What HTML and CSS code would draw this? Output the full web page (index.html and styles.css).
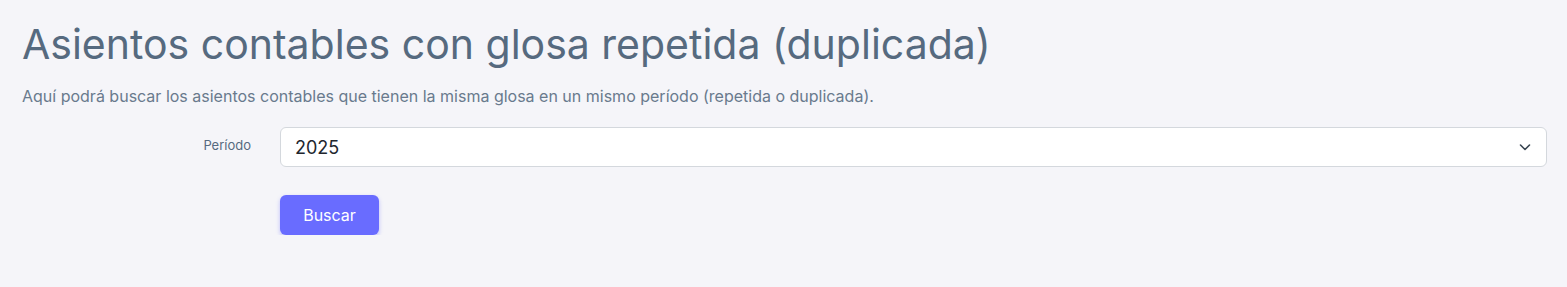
FILE: index.html
```html
<!DOCTYPE html>
<html lang="es">
<head>
<meta charset="utf-8">
<title>Asientos contables con glosa repetida</title>
<link rel="stylesheet" href="styles.css">
</head>
<body>
<div class="page">
  <h1 class="title">Asientos contables con glosa repetida (duplicada)</h1>
  <p class="lead">Aquí podrá buscar los asientos contables que tienen la misma glosa en un mismo período (repetida o duplicada).</p>
  <form class="form">
    <label class="label" for="periodo">Período</label>
    <div class="select-wrap">
      <select id="periodo" class="select">
        <option>2025</option>
      </select>
      <svg class="chev" viewBox="0 0 16 16" width="16" height="16"><path d="M3.5 6 L8 10.5 L12.5 6" fill="none" stroke="#384551" stroke-width="1.6" stroke-linecap="round" stroke-linejoin="round"/></svg>
    </div>
    <div></div>
    <div class="actions"><button type="button" class="btn">Buscar</button></div>
  </form>
</div>
</body>
</html>
```
FILE: styles.css
```css
html, body {
  margin: 0;
  padding: 0;
  background: #f5f5f9;
}
body {
  font-family: Inter, "Noto Sans", sans-serif;
  color: #697a8d;
}
.page {
  padding: 16px 20px 0 22px;
}
.title {
  margin: 0;
  font-size: 41px;
  font-weight: 400;
  line-height: 56px;
  color: #566a7f;
}
.lead {
  margin: 13px 0 0;
  font-size: 16px;
  line-height: 22px;
  color: #697a8d;
}
.form {
  display: grid;
  grid-template-columns: 258px 1fr;
  row-gap: 28px;
  margin-top: 20px;
}
.label {
  justify-self: end;
  padding-right: 29px;
  padding-top: 10px;
  font-size: 13px;
  color: #566a7f;
}
.select-wrap {
  position: relative;
}
.select {
  display: block;
  width: 100%;
  height: 40px;
  box-sizing: border-box;
  appearance: none;
  -webkit-appearance: none;
  background: #fff;
  border: 1px solid #d4d8dd;
  border-radius: 6px;
  padding: 0 14px;
  font-family: Inter, sans-serif;
  font-size: 18px;
  color: #22262e;
}
.chev {
  position: absolute;
  right: 14px;
  top: 12px;
  pointer-events: none;
}
.btn {
  width: 99px;
  height: 40px;
  border: none;
  border-radius: 6px;
  background: #696cff;
  color: #fff;
  font-family: Inter, sans-serif;
  font-size: 16px;
  box-shadow: 0 2px 4px rgba(105, 108, 255, 0.4);
  cursor: pointer;
}
```
